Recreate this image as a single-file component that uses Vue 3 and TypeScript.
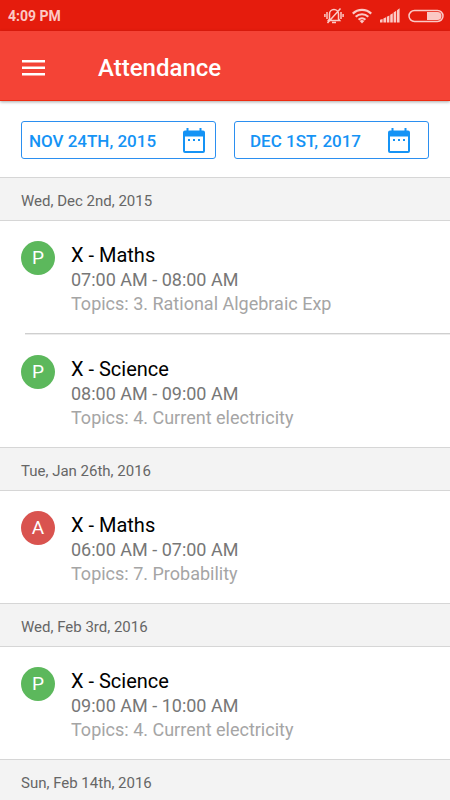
<script setup lang="ts">
import { ref } from 'vue'

interface Lesson {
  status: 'P' | 'A'
  subject: string
  time: string
  topics: string
}

interface Day {
  date: string
  lessons: Lesson[]
}

const fromDate = ref('Nov 24th, 2015')
const toDate = ref('Dec 1st, 2017')

const days: Day[] = [
  {
    date: 'Wed, Dec 2nd, 2015',
    lessons: [
      { status: 'P', subject: 'X - Maths', time: '07:00 AM - 08:00 AM', topics: '3. Rational Algebraic Exp' },
      { status: 'P', subject: 'X - Science', time: '08:00 AM - 09:00 AM', topics: '4. Current electricity' },
    ],
  },
  {
    date: 'Tue, Jan 26th, 2016',
    lessons: [{ status: 'A', subject: 'X - Maths', time: '06:00 AM - 07:00 AM', topics: '7. Probability' }],
  },
  {
    date: 'Wed, Feb 3rd, 2016',
    lessons: [{ status: 'P', subject: 'X - Science', time: '09:00 AM - 10:00 AM', topics: '4. Current electricity' }],
  },
  { date: 'Sun, Feb 14th, 2016', lessons: [] },
]
</script>

<template>
  <div class="screen">
    <div class="status-bar">
      <span class="clock">4:09 PM</span>
      <div class="indicators">
        <svg width="20" height="18" viewBox="0 0 20 18" fill="none" stroke="currentColor" stroke-width="1.5">
          <path d="M5.5 12V7a4.5 4.5 0 0 1 9 0v5l1.2 1.6H4.3zM8 15.6h4M3 5v7M.9 7v3M17 5v7M19.1 7v3M16.5 1.5 3.5 16" />
        </svg>
        <svg width="20" height="16" viewBox="0 0 20 16" fill="none" stroke="currentColor" stroke-width="2.2">
          <path d="M.8 5.6a13.2 13.2 0 0 1 18.4 0M3.7 8.8a9 9 0 0 1 12.6 0M6.6 11.7a5 5 0 0 1 6.8 0" />
          <path d="m10 15.6-2.3-2.5a3.3 3.3 0 0 1 4.6 0z" fill="currentColor" stroke="none" />
        </svg>
        <svg width="20" height="15" viewBox="0 0 20 15" fill="currentColor">
          <path d="M0 11.8 2.6 11v3.5H0zM3.4 10.4 6 9.3v5.2H3.4zM6.8 8.8l2.6-1.4v7.1H6.8zM10.2 6.8l2.6-1.6v9.3h-2.6zM13.6 4.5l2.6-1.8v11.8h-2.6zM17 2.2 19.6.3v14.2H17z" />
        </svg>
        <svg width="36" height="14" viewBox="0 0 36 14">
          <rect x="1" y="1.5" width="34" height="11" rx="5.5" fill="none" stroke="currentColor" stroke-width="1.5" />
          <path d="M19 3h10.5a4 4 0 0 1 0 8H19z" fill="currentColor" />
        </svg>
      </div>
    </div>

    <header class="toolbar">
      <button class="menu" type="button" aria-label="Menu">
        <svg width="24" height="16" viewBox="0 0 24 16" fill="#fff">
          <path d="M0 0h23v2.5H0zM0 6.5h23V9H0zM0 13h23v2.5H0z" />
        </svg>
      </button>
      <h1>Attendance</h1>
    </header>

    <main>
      <div class="filters">
        <button v-for="(date, i) in [fromDate, toDate]" :key="i" class="date-button" type="button">
          <span>{{ date }}</span>
          <svg width="24" height="26" viewBox="0 0 24 26" fill="currentColor">
            <path fill-rule="evenodd" d="M4.5 0h2v2.500h11V0h2v2.500H21a2 2 0 0 1 2 2V23a2 2 0 0 1-2 2H3a2 2 0 0 1-2-2V4.500a2 2 0 0 1 2-2h1.500zM3 8.500V23h18V8.500z" />
            <path d="M6 11h2v2H6zM11 11h2v2h-2zM16 11h2v2h-2z" />
          </svg>
        </button>
      </div>

      <section v-for="day in days" :key="day.date">
        <h2>{{ day.date }}</h2>
        <ul v-if="day.lessons.length">
          <li v-for="lesson in day.lessons" :key="lesson.time">
            <span class="badge" :class="{ absent: lesson.status === 'A' }">{{ lesson.status }}</span>
            <div class="details">
              <h3>{{ lesson.subject }}</h3>
              <p class="time">{{ lesson.time }}</p>
              <p class="topics">Topics: {{ lesson.topics }}</p>
            </div>
          </li>
        </ul>
      </section>
    </main>
  </div>
</template>

<style>
body {
  margin: 0;
  background: #fff;
}
</style>

<style scoped>
.screen {
  height: 100vh;
  overflow: hidden;
  display: flex;
  flex-direction: column;
  font-family: Roboto, 'Liberation Sans', sans-serif;
  background: #fff;
}

h1, h2, h3, p, ul {
  margin: 0;
  padding: 0;
  font-weight: 400;
}

button {
  font: inherit;
  cursor: pointer;
}

svg {
  display: block;
  flex: none;
}

.status-bar {
  flex: none;
  display: flex;
  align-items: center;
  justify-content: space-between;
  height: 31px;
  padding: 0 6px 0 8px;
  background: #e51c0d;
  color: #fbc9c5;
}

.clock {
  font-size: 14px;
  font-weight: 700;
}

.indicators {
  display: flex;
  align-items: center;
  gap: 8px;
}

.toolbar {
  flex: none;
  position: relative;
  display: flex;
  align-items: center;
  gap: 52px;
  height: 70px;
  padding: 4px 22px 0;
  box-sizing: border-box;
  background: #f44336;
  border-bottom: 1px solid #ee2c12;
  box-shadow: 0 1px 3px rgba(0, 0, 0, 0.35);
  color: #fff;
}

.menu {
  padding: 0;
  border: 0;
  background: none;
}

h1 {
  font-size: 24px;
  line-height: 32px;
  font-weight: 500;
}

main {
  flex: 1;
  min-height: 0;
  overflow: hidden;
}

.filters {
  display: grid;
  grid-template-columns: 1fr 1fr;
  gap: 18px;
  padding: 20px 21px 18px;
}

.date-button {
  display: flex;
  align-items: center;
  justify-content: center;
  gap: 26px;
  height: 38px;
  padding: 2px 2px 0 0;
  border: 1px solid #2b8ff0;
  border-radius: 3px;
  background: #fff;
  color: #1593f5;
  font-size: 17px;
  font-weight: 500;
  text-transform: uppercase;
  white-space: nowrap;
}

h2 {
  padding: 0 21px;
  border: solid #d6d6d6;
  border-width: 1px 0;
  background: #f3f3f3;
  color: #666;
  font-size: 15px;
  line-height: 46px;
  box-sizing: border-box;
  height: 44px;
}

ul {
  list-style: none;
}

li {
  display: flex;
  gap: 16px;
  padding: 20px 21px 17px;
}

li + li {
  position: relative;
  margin-top: 2px;
}

li + li::before {
  content: '';
  position: absolute;
  top: -2px;
  left: 25px;
  right: 0;
  border-top: 1px solid #cfcfcf;
  border-bottom: 1px solid #ececec;
}

.badge {
  flex: none;
  width: 34px;
  height: 34px;
  border-radius: 50%;
  background: #5cb85c;
  color: #fff;
  font-size: 19px;
  line-height: 33px;
  text-align: center;
}

.badge.absent {
  background: #d9534f;
}

.details {
  min-width: 0;
}

h3 {
  padding-top: 1px;
  color: #000;
  font-size: 20px;
  line-height: 26px;
}

p {
  font-size: 18px;
  line-height: 24px;
}

.time {
  color: #777;
}

.topics {
  color: #a5a5a5;
}
</style>
